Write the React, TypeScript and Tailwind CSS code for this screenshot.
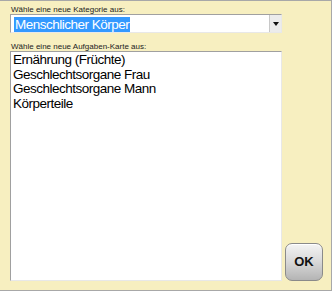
import React from "react";

const items = [
  "Ernährung (Früchte)",
  "Geschlechtsorgane Frau",
  "Geschlechtsorgane Mann",
  "Körperteile",
];

export default function App() {
  return (
    <div
      className="w-[332px] h-[291px] bg-[#f7efc0] border-r border-b border-t border-[#a8a8a8] flex flex-col pl-[10px] pr-[49px]"
      style={{ fontFamily: '"Liberation Sans", Arial, sans-serif' }}
    >
      <div className="text-[8px] leading-[9px] text-[#222] mt-[4px] ml-[1px]">Wähle eine neue Kategorie aus:</div>
      <div className="h-[19px] bg-white border border-[#a0a0a0] border-r-[#e8e8e8] border-b-[#e8e8e8] flex items-center">
        <div className="flex-1 pl-[3px]">
          <span className="inline-block bg-[#3399ff] text-white text-[13.5px] leading-[15px] tracking-[-0.5px] px-[1px]">
            Menschlicher Körper
          </span>
        </div>
        <div className="w-[12px] h-[17px] bg-[#ececec] border-l border-[#c8c8c8] flex items-center justify-center">
          <svg width="6" height="4" viewBox="0 0 6 4">
            <path d="M0 0h6L3 4z" fill="#111" />
          </svg>
        </div>
      </div>
      <div className="text-[8px] leading-[9px] text-[#222] mt-[9px] ml-[1px]">Wähle eine neue Aufgaben-Karte aus:</div>
      <div className="flex items-end h-[230px] -mr-[49px]">
        <div className="w-[272px] h-full bg-white border border-[#a0a0a0] border-r-[#e8e8e8] border-b-[#e8e8e8] pl-[2px] pt-[1px]">
          {items.map((t) => (
            <div key={t} className="text-[13.5px] leading-[14.5px] tracking-[-0.5px] text-black">
              {t}
            </div>
          ))}
        </div>
        <button className="ml-[3px] w-[38px] h-[38px] rounded-[7px] border border-[#8a8a8a] bg-gradient-to-b from-[#f4f4f4] via-[#d8d8d8] to-[#b4b4b4] shadow-[inset_0_1px_0_#fff] text-[13px] font-bold text-[#111] flex items-center justify-center">
          OK
        </button>
      </div>
    </div>
  );
}
